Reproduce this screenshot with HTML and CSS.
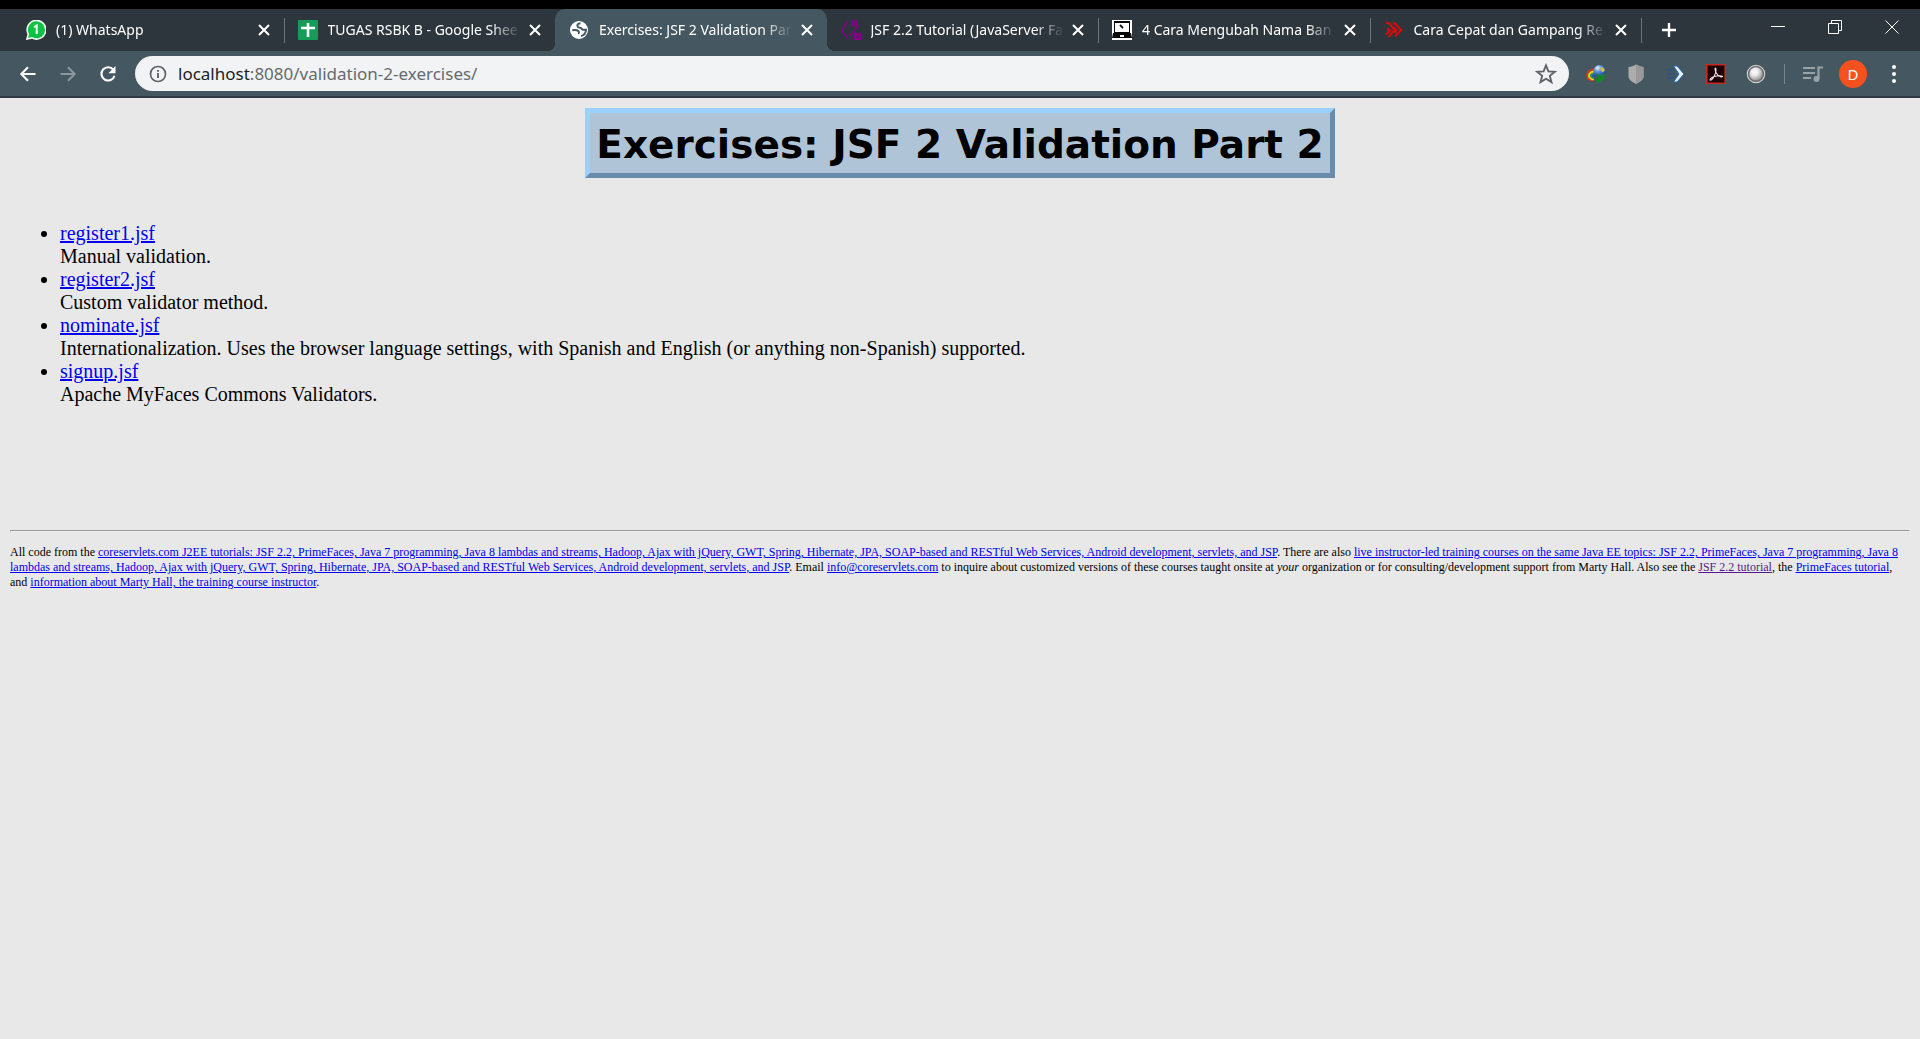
FILE: index.html
```html
<!DOCTYPE html>
<html lang="en">
<head>
<meta charset="utf-8">
<title>Exercises: JSF 2 Validation Part 2</title>
<link rel="stylesheet" href="styles.css">
</head>
<body>
<header class="browser">
  <div class="tabstrip">
    <div class="tabs" role="tablist">
      <div class="tab" role="tab">
        <svg class="favicon" viewBox="0 0 20 20"><path d="M1 19l1.300-4.800A9.300 9.300 0 1 1 6 17.900z" fill="#12c143" stroke="#f4fff6" stroke-width="1.600"/><path d="M8 7.200l2.700-1.700v8.500" fill="none" stroke="#fff" stroke-width="2"/></svg>
        <span class="tab-title">(1) WhatsApp</span>
        <button class="tab-close" aria-label="Close tab"><svg viewBox="0 0 12 12"><path d="M1 1l10 10M11 1L1 11"/></svg></button>
      </div>
      <div class="tab" role="tab">
        <svg class="favicon" viewBox="0 0 20 20"><rect width="20" height="20" rx="1" fill="#149c58"/><path d="M10 3v14M3 8h14" stroke="#fff" stroke-width="2.600"/></svg>
        <span class="tab-title">TUGAS RSBK B - Google Shee</span>
        <button class="tab-close" aria-label="Close tab"><svg viewBox="0 0 12 12"><path d="M1 1l10 10M11 1L1 11"/></svg></button>
      </div>
      <div class="tab active" role="tab" aria-selected="true">
        <svg class="favicon" viewBox="0 0 20 20"><circle cx="10" cy="10" r="9" fill="#fff"/><path d="M11.500 3.200C8.500 3.500 8.200 5 8.500 6.300c.4 1.500 2 1.200 3.200 1.600 1.100.4 1 1.600 2.300 1.900 1 .2 2-.2 3-.1-.2 3.300-2 5.600-5 6.400M3.200 10.300c2.800-.4 5.200-.2 6.300.9 1 1-.1 1.700.6 2.600" fill="none" stroke="#455761" stroke-width="2"/></svg>
        <span class="tab-title">Exercises: JSF 2 Validation Par</span>
        <button class="tab-close" aria-label="Close tab"><svg viewBox="0 0 12 12"><path d="M1 1l10 10M11 1L1 11"/></svg></button>
      </div>
      <div class="tab" role="tab">
        <svg class="favicon" viewBox="0 0 20 20"><path d="M7 1L1 9v2l6 8M18 5L9 16" fill="none" stroke="#870087" stroke-width="1.600"/><path d="M10 0h6v6h-6zM13 13h7v7h-7z" fill="#870087"/><path d="M11.500 2h3M11.500 4h3M15 15.500h3M15 17.500h3" stroke="#4b2350"/></svg>
        <span class="tab-title">JSF 2.2 Tutorial (JavaServer Fa</span>
        <button class="tab-close" aria-label="Close tab"><svg viewBox="0 0 12 12"><path d="M1 1l10 10M11 1L1 11"/></svg></button>
      </div>
      <div class="tab" role="tab">
        <svg class="favicon" viewBox="0 0 20 20"><path d="M0 0h20v20H0z" fill="#fff"/><path d="M2 1h16v12H2zM1 13h18l1 5H0z" fill="#080808"/><path d="M3 3h14v9H3zM8 15h4v2H8z" fill="#fff"/><path d="M8 5l3 3" stroke="#111" stroke-width="1.800"/></svg>
        <span class="tab-title">4 Cara Mengubah Nama Ban</span>
        <button class="tab-close" aria-label="Close tab"><svg viewBox="0 0 12 12"><path d="M1 1l10 10M11 1L1 11"/></svg></button>
      </div>
      <div class="tab" role="tab">
        <svg class="favicon" viewBox="0 0 20 20"><path d="M2 2.500l3.500 1L10.500 10 4.500 17M10.500 3l6.500 7-6 6.500M3 8.500l3 2-4 4M9.500 2.500l2 2M8 7l4 3-1 3" fill="none" stroke="#c9100f" stroke-width="2.400"/></svg>
        <span class="tab-title">Cara Cepat dan Gampang Re</span>
        <button class="tab-close" aria-label="Close tab"><svg viewBox="0 0 12 12"><path d="M1 1l10 10M11 1L1 11"/></svg></button>
      </div>
    </div>
    <button class="new-tab" aria-label="New tab"><svg viewBox="0 0 16 16"><path d="M8 1v14M1 8h14" stroke="#fff" stroke-width="2.400"/></svg></button>
    <div class="window-controls">
      <button aria-label="Minimize"><svg viewBox="0 0 14 14"><path d="M0 6.500h14"/></svg></button>
      <button aria-label="Restore"><svg viewBox="0 0 14 14"><path d="M.5 3.500h10v10H.5zM3.500 3V.5h10v10H11"/></svg></button>
      <button aria-label="Close"><svg viewBox="0 0 14 14"><path d="M.5.5l13 13M13.500.5l-13 13"/></svg></button>
    </div>
  </div>
  <div class="toolbar">
    <button class="nav" aria-label="Back"><svg viewBox="0 0 24 24"><path d="M21 12H4.500M12 4l-8 8 8 8" fill="none" stroke="#fff" stroke-width="2.500"/></svg></button>
    <button class="nav" aria-label="Forward"><svg viewBox="0 0 24 24"><path d="M3 12h16.500M12 4l8 8-8 8" fill="none" stroke="#8b979d" stroke-width="2.500"/></svg></button>
    <button class="nav" aria-label="Reload"><svg viewBox="0 0 24 24"><path d="M18.500 7A8 8 0 1 0 19.800 14" fill="none" stroke="#fff" stroke-width="2.500"/><path d="M21 2.500V11h-8.500z" fill="#fff"/></svg></button>
    <div class="omnibox">
      <svg class="info" viewBox="0 0 18 18"><circle cx="9" cy="9" r="7.500" fill="none" stroke="#5f6368" stroke-width="1.700"/><path d="M9 8v5M9 5v1.800" stroke="#5f6368" stroke-width="1.900"/></svg>
      <div class="url" role="textbox" aria-label="Address" contenteditable="true" spellcheck="false"><span class="host">localhost</span>:8080/validation-2-exercises/</div>
      <button class="star" aria-label="Bookmark this page"><svg viewBox="0 0 20 20"><path d="M10 2.200l2.200 5.400 5.800.4-4.500 3.700 1.500 5.700-5-3.100-5 3.100 1.500-5.700L2 8l5.800-.4z" fill="none" stroke="#5f6368" stroke-width="1.700"/></svg></button>
    </div>
    <div class="extensions">
      <button aria-label="Download manager"><svg viewBox="0 0 20 20"><defs><radialGradient id="globe" cx=".35" cy=".25" r=".8"><stop offset="0" stop-color="#eaf6ff"/><stop offset=".4" stop-color="#5a90d8"/><stop offset="1" stop-color="#153f91"/></radialGradient></defs><path d="M10 5.500C4 4.500 1 8 1 11.500 1 14 3 16 7 16.500" fill="none" stroke="#d63b1c" stroke-width="1.800"/><path d="M10 7.500c-4-.5-7 1.500-7 4s2 3.500 5 4" fill="none" stroke="#e3d51c" stroke-width="2"/><path d="M10 9c-3 0-5 1.200-5 3s1.500 2 3 2.500" fill="#2c4fbf" stroke="#30a33d" stroke-width="1.500"/><circle cx="13.500" cy="7" r="6" fill="url(#globe)"/><path d="M14.500 3c2-.5 3.500 1 4.500 3l-2 2.500-2.500-2z" fill="#c9bd53"/><path d="M9 9l5 2.500 6-2-2.500 3.500 1 1.500-6 4.500L9 16l3-2z" fill="#128a24"/></svg></button>
      <button aria-label="Shield"><svg viewBox="0 0 20 20"><path d="M10 .5c2.500 1.600 5 2.300 7.500 2.500v9.500c0 3.500-4 5.500-7.500 7.500-3.500-2-7.500-4-7.500-7.500V3c2.500-.2 5-.9 7.500-2.500z" fill="#acacac"/><path d="M10 .5c2.500 1.600 5 2.300 7.500 2.500v9.500c0 3.500-4 5.500-7.500 7.500z" fill="#999"/></svg></button>
      <button aria-label="Arrow extension"><svg viewBox="0 0 20 20"><path d="M1 6h7M0 10h9M1 14h7" stroke="#315677" stroke-width="2"/><path d="M7.500 2H11l7 8-7 8H7.500l5.500-8z" fill="#e6f4ff" stroke="#2168b0"/></svg></button>
      <button aria-label="Acrobat"><svg viewBox="0 0 20 20"><path d="M.8.8h18.400v18.400H.8z" fill="#1b0306" stroke="#c52a1d" stroke-width="1.600"/><path d="M4 16c1.500.8 3.500-2 5-5.500S10 4 9.500 4s-1 2 .8 5c2 3.500 5.700 4.500 6.200 3.500s-5-1-8 0-4.500 2.300-4.500 3.500z" fill="none" stroke="#eadfdf" stroke-width="1.100"/></svg></button>
      <button aria-label="Sphere extension"><svg viewBox="0 0 20 20"><defs><radialGradient id="ball" cx=".4" cy=".35" r=".7"><stop offset="0" stop-color="#fff"/><stop offset=".4" stop-color="#e8e8e8"/><stop offset="1" stop-color="#858585"/></radialGradient></defs><circle cx="10" cy="10" r="8.700" fill="#696969" stroke="#c9c9c9" stroke-width="1.200"/><circle cx="10" cy="10" r="6.700" fill="url(#ball)"/></svg></button>
    </div>
    <div class="profile">
      <button class="media" aria-label="Media"><svg viewBox="0 0 20 16"><path d="M0 2h12M0 7h12M0 12h8" stroke="#97a2a8" stroke-width="2"/><path d="M15.500 13V1.500H20" fill="none" stroke="#97a2a8" stroke-width="2.200"/><circle cx="13.500" cy="13" r="3" fill="#97a2a8"/></svg></button>
      <button class="avatar">D</button>
      <button class="menu" aria-label="Menu"><svg viewBox="0 0 4 18"><circle cx="2" cy="2" r="2"/><circle cx="2" cy="9" r="2"/><circle cx="2" cy="16" r="2"/></svg></button>
    </div>
  </div>
</header>
<main class="page">
  <h1 class="title">Exercises: JSF 2 Validation Part 2</h1>
  <ul class="exercises">
    <li><a href="#register1">register1.jsf</a><br>Manual validation.</li>
    <li><a href="#register2">register2.jsf</a><br>Custom validator method.</li>
    <li><a href="#nominate">nominate.jsf</a><br>Internationalization. Uses the browser language settings, with Spanish and English (or anything non-Spanish) supported.</li>
    <li><a href="#signup">signup.jsf</a><br>Apache MyFaces Commons Validators.</li>
  </ul>
  <hr class="rule">
  <p class="credits">All code from the <a href="#tutorials">coreservlets.com J2EE tutorials: JSF 2.2, PrimeFaces, Java 7 programming, Java 8 lambdas and streams, Hadoop, Ajax with jQuery, GWT, Spring, Hibernate, JPA, SOAP-based and RESTful Web Services, Android development, servlets, and JSP</a>. There are also <a href="#courses">live instructor-led training courses on the same Java EE topics: JSF 2.2, PrimeFaces, Java 7 programming, Java 8 lambdas and streams, Hadoop, Ajax with jQuery, GWT, Spring, Hibernate, JPA, SOAP-based and RESTful Web Services, Android development, servlets, and JSP</a>. Email <a href="#email">info@coreservlets.com</a> to inquire about customized versions of these courses taught onsite at <i>your</i> organization or for consulting/development support from Marty Hall. Also see the <a class="seen" href="#jsf">JSF 2.2 tutorial</a>, the <a href="#primefaces">PrimeFaces tutorial</a>, and <a href="#marty">information about Marty Hall, the training course instructor</a>.</p>
</main>
</body>
</html>
```
FILE: styles.css
```css
* { box-sizing: border-box; }
body {
  margin: 0;
  min-height: 100vh;
  background: #e8e8e8;
  color: #000;
  font: 20px/23px "Liberation Serif", "Times New Roman", serif;
}
button { padding: 0; border: 0; background: none; display: grid; place-items: center; }
svg { display: block; }

/* Browser chrome */
.browser {
  border-top: 9px solid #000;
  border-bottom: 2px solid #2f3c43;
  background: #455761;
  font-family: "Noto Sans", "Open Sans", sans-serif;
}
.tabstrip { display: flex; height: 42px; padding-left: 12px; background: #2c363c; }
.tabs { display: flex; flex: 0 1 1629px; min-width: 0; }
.tab {
  position: relative;
  display: flex;
  flex: 1 1 0;
  align-items: center;
  min-width: 0;
  padding: 0 14px;
  color: #fff;
  font-size: 14px;
  line-height: 20px;
}
.tab::after {
  content: "";
  position: absolute;
  right: -1px;
  top: 9px;
  width: 1px;
  height: 25px;
  background: #6a757b;
}
.tab:has(+ .active)::after { display: none; }
.tab.active { background: #455761; border-radius: 10px 10px 0 0; }
.tab.active::before, .tab.active::after {
  content: "";
  display: block;
  position: absolute;
  top: auto;
  bottom: 0;
  width: 8px;
  height: 8px;
}
.tab.active::before { left: -8px; background: radial-gradient(circle at 0 0, #2c363c 8px, #455761 8px); }
.tab.active::after { right: -8px; background: radial-gradient(circle at 100% 0, #2c363c 8px, #455761 8px); }
.favicon { flex: none; width: 20px; height: 20px; margin-right: 10px; }
.tab-title {
  flex: 1;
  overflow: hidden;
  padding-bottom: 1px;
  white-space: nowrap;
  mask-image: linear-gradient(to right, #000 calc(100% - 30px), transparent);
}
.tab-close { flex: none; width: 12px; height: 12px; margin-left: 8px; }
.tab-close svg { width: 12px; height: 12px; stroke: #fff; stroke-width: 2; }
.new-tab { width: 56px; }
.new-tab svg { width: 16px; height: 16px; }
.window-controls { display: flex; height: 36px; margin-left: auto; }
.window-controls button { width: 57px; }
.window-controls svg { width: 14px; height: 14px; fill: none; stroke: #fff; stroke-width: 1; }

.toolbar { display: flex; align-items: center; height: 45px; padding: 0 23px 0 8px; }
.nav { width: 40px; height: 40px; }
.nav svg { width: 20px; height: 20px; }
.omnibox {
  display: flex;
  flex: 1;
  align-items: center;
  height: 35px;
  margin-left: 7px;
  padding: 0 12px 0 14px;
  border-radius: 18px;
  background: #f1f3f4;
}
.info { width: 18px; height: 18px; }
.url { flex: 1; margin-left: 11px; color: #666a6e; font-size: 17px; line-height: 24px; white-space: nowrap; outline: 0; }
.host { color: #202124; }
.star svg { width: 22px; height: 22px; }
.extensions { display: flex; gap: 20px; padding: 0 18px 0 17px; }
.extensions svg { width: 20px; height: 20px; }
.profile { display: flex; align-items: center; }
.profile::before { content: ""; width: 1px; height: 20px; background: #75838b; }
.media { margin-left: 18px; }
.media svg { width: 20px; height: 16px; }
.avatar {
  width: 28px;
  height: 28px;
  margin: 0 24px 0 16px;
  border-radius: 50%;
  background: #f4511e;
  color: #fff;
  font: 15px/28px "Noto Sans", sans-serif;
}
.menu { width: 6px; }
.menu svg { width: 4px; height: 18px; fill: #fff; }

/* Web page */
.page { padding: 10px; }
.title {
  width: fit-content;
  margin: 0 auto;
  padding: 8px 6px 4px;
  border: 5px solid;
  border-color: #9bd0ff #698cac #698cac #9bd0ff;
  background: #b0c4d8;
  font: bold 39px/48px Verdana, "DejaVu Sans", sans-serif;
}
.exercises { margin: 44px 0 124px; padding-left: 50px; }
a { color: #00e; }
.seen { color: #551a8b; }
.rule { margin: 0; border: 1px solid; border-color: #9a9a9a #eee #eee #9a9a9a; }
.credits { margin: 13px 0; font-size: 12px; line-height: 15px; }
```
